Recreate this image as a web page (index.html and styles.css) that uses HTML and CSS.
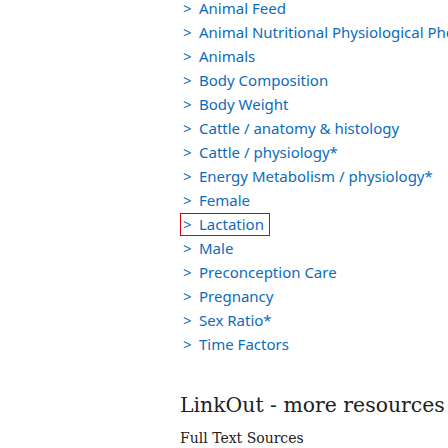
FILE: index.html
```html
<!DOCTYPE html>
<html>
<head>
<meta charset="utf-8">
<link rel="stylesheet" href="styles.css">
</head>
<body>
<div class="page">
  <ul class="terms">
    <li><a class="term" href="#"><span class="chev">&gt;</span>Animal Feed</a></li>
    <li><a class="term" href="#"><span class="chev">&gt;</span>Animal Nutritional Physiological Phenomena</a></li>
    <li><a class="term" href="#"><span class="chev">&gt;</span>Animals</a></li>
    <li><a class="term" href="#"><span class="chev">&gt;</span>Body Composition</a></li>
    <li><a class="term" href="#"><span class="chev">&gt;</span>Body Weight</a></li>
    <li><a class="term" href="#"><span class="chev">&gt;</span>Cattle / anatomy &amp; histology</a></li>
    <li><a class="term" href="#"><span class="chev">&gt;</span>Cattle / physiology*</a></li>
    <li><a class="term" href="#"><span class="chev">&gt;</span>Energy Metabolism / physiology*</a></li>
    <li><a class="term" href="#"><span class="chev">&gt;</span>Female</a></li>
    <li><a class="term focused" href="#"><span class="chev">&gt;</span>Lactation</a></li>
    <li><a class="term" href="#"><span class="chev">&gt;</span>Male</a></li>
    <li><a class="term" href="#"><span class="chev">&gt;</span>Preconception Care</a></li>
    <li><a class="term" href="#"><span class="chev">&gt;</span>Pregnancy</a></li>
    <li><a class="term" href="#"><span class="chev">&gt;</span>Sex Ratio*</a></li>
    <li><a class="term" href="#"><span class="chev">&gt;</span>Time Factors</a></li>
  </ul>
  <h2 class="section-title">LinkOut - more resources</h2>
  <h3 class="sub-title">Full Text Sources</h3>
</div>
</body>
</html>
```
FILE: styles.css
```css
html, body {
  margin: 0;
  padding: 0;
  background: #ffffff;
  overflow: hidden;
}
.page {
  padding-left: 180px;
  width: 600px;
}
.terms {
  list-style: none;
  margin: -3px 0 0 0;
  padding: 0;
}
.terms li {
  height: 24px;
  white-space: nowrap;
}
.term {
  display: inline-block;
  vertical-align: top;
  height: 23px;
  line-height: 23px;
  font-family: "Noto Sans", sans-serif;
  font-size: 15px;
  color: #0b6cbc;
  text-decoration: none;
  padding-left: 3px;
}
.chev {
  display: inline-block;
  width: 16px;
}
.focused {
  outline: 1px solid #d9000f;
  outline-offset: -1px;
  padding-right: 6px;
}
.section-title {
  font-family: "DejaVu Serif", serif;
  font-weight: normal;
  font-size: 20.4px;
  color: #212121;
  margin: 34px 0 0 0;
  line-height: 28px;
}
.sub-title {
  font-family: "DejaVu Serif", serif;
  font-weight: normal;
  font-size: 14px;
  color: #212121;
  margin: 9px 0 0 0;
  line-height: 20px;
}
```
